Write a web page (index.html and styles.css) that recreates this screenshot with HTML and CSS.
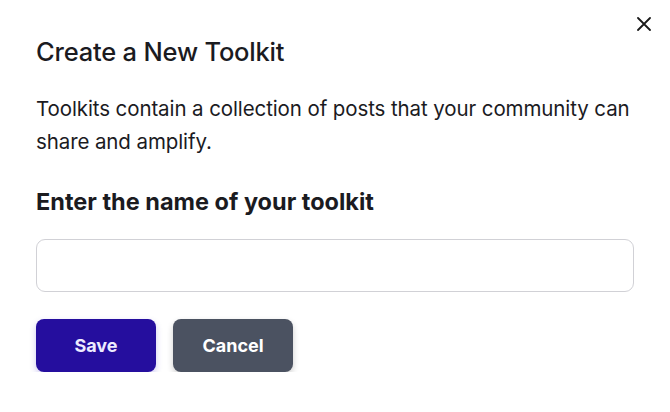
FILE: index.html
```html
<!DOCTYPE html>
<html>
<head>
<meta charset="utf-8">
<link rel="stylesheet" href="styles.css">
</head>
<body>
<div class="modal">
  <button class="close" aria-label="Close">
    <svg width="14" height="14" viewBox="0 0 14 14"><path d="M1 1L13 13M13 1L1 13" stroke="#1a1a1a" stroke-width="1.8" stroke-linecap="round"/></svg>
  </button>
  <h1 class="title">Create a New Toolkit</h1>
  <p class="desc">Toolkits contain a collection of posts that your community can share and amplify.</p>
  <h2 class="label">Enter the name of your toolkit</h2>
  <input class="field" type="text">
  <div class="actions">
    <button class="btn btn-save">Save</button>
    <button class="btn btn-cancel">Cancel</button>
  </div>
</div>
</body>
</html>
```
FILE: styles.css
```css
html, body { margin: 0; background: #fff; }
body { font-family: Inter, "Noto Sans", sans-serif; color: #1b1b1f; }
.modal { position: relative; padding: 34px 36px 0 36px; width: 598px; }
.close { position: absolute; top: 17px; right: 19px; background: none; border: 0; padding: 0; width: 14px; height: 14px; cursor: pointer; display: flex; }
.title { font-size: 25.5px; font-weight: 500; margin: 0; line-height: 36px; letter-spacing: -0.2px; }
.desc { font-size: 20.5px; line-height: 33px; margin: 22px 0 0 0; font-weight: 400; letter-spacing: -0.1px; }
.label { font-size: 23.5px; font-weight: 700; margin: 28px 0 0 0; line-height: 32px; }
.field { display: block; box-sizing: border-box; width: 598px; height: 53px; margin-top: 21px; border: 1px solid #d1d1d6; border-radius: 9px; outline: none; font: inherit; padding: 0 14px; }
.actions { display: flex; gap: 17px; margin-top: 27px; }
.btn { width: 120px; height: 53px; border: 0; border-radius: 8px; color: #fff; font-family: Inter, sans-serif; font-size: 18px; font-weight: 700; }
.btn-save { background: #250e9e; color: #ecebff; box-shadow: 0 3px 6px rgba(60, 40, 200, 0.25); }
.btn-cancel { background: #4b5261; box-shadow: 0 3px 6px rgba(0, 0, 0, 0.2); }
```
